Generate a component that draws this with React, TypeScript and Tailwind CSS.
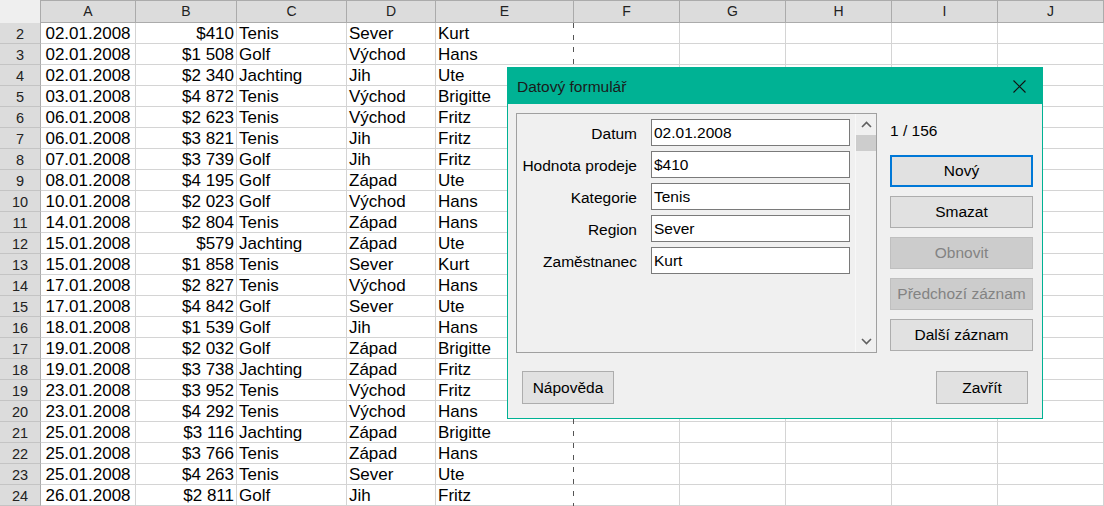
import React from "react";

type Row = [number, string, string, string, string, string];

const rows: Row[] = [
  [2, "02.01.2008", "$410", "Tenis", "Sever", "Kurt"],
  [3, "02.01.2008", "$1 508", "Golf", "Východ", "Hans"],
  [4, "02.01.2008", "$2 340", "Jachting", "Jih", "Ute"],
  [5, "03.01.2008", "$4 872", "Tenis", "Východ", "Brigitte"],
  [6, "06.01.2008", "$2 623", "Tenis", "Východ", "Fritz"],
  [7, "06.01.2008", "$3 821", "Tenis", "Jih", "Fritz"],
  [8, "07.01.2008", "$3 739", "Golf", "Jih", "Fritz"],
  [9, "08.01.2008", "$4 195", "Golf", "Západ", "Ute"],
  [10, "10.01.2008", "$2 023", "Golf", "Východ", "Hans"],
  [11, "14.01.2008", "$2 804", "Tenis", "Západ", "Hans"],
  [12, "15.01.2008", "$579", "Jachting", "Západ", "Ute"],
  [13, "15.01.2008", "$1 858", "Tenis", "Sever", "Kurt"],
  [14, "17.01.2008", "$2 827", "Tenis", "Východ", "Hans"],
  [15, "17.01.2008", "$4 842", "Golf", "Sever", "Ute"],
  [16, "18.01.2008", "$1 539", "Golf", "Jih", "Hans"],
  [17, "19.01.2008", "$2 032", "Golf", "Západ", "Brigitte"],
  [18, "19.01.2008", "$3 738", "Jachting", "Západ", "Fritz"],
  [19, "23.01.2008", "$3 952", "Tenis", "Východ", "Fritz"],
  [20, "23.01.2008", "$4 292", "Tenis", "Východ", "Hans"],
  [21, "25.01.2008", "$3 116", "Jachting", "Západ", "Brigitte"],
  [22, "25.01.2008", "$3 766", "Tenis", "Západ", "Hans"],
  [23, "25.01.2008", "$4 263", "Tenis", "Sever", "Ute"],
  [24, "26.01.2008", "$2 811", "Golf", "Jih", "Fritz"],
];

const cols = ["A", "B", "C", "D", "E", "F", "G", "H", "I", "J"];

const cell =
  "h-[21px] border-b border-r border-[#d4d4d4] text-[17px] leading-[20px] pt-[1px] overflow-hidden whitespace-nowrap text-black";

function Field({ label, value }: { label: string; value: string }) {
  return (
    <div className="flex items-center h-[27px]">
      <div className="w-[121px] text-right pr-[1px] pt-[2px] whitespace-nowrap">{label}</div>
      <div className="ml-[13px] w-[199px] h-[27px] bg-white border border-[#7a7a7a] flex items-center pl-[2px]">
        {value}
      </div>
    </div>
  );
}

function Btn({
  children,
  variant = "normal",
}: {
  children: React.ReactNode;
  variant?: "normal" | "default" | "disabled";
}) {
  const base = "w-[143px] h-[32px] flex items-center justify-center";
  if (variant === "default")
    return <div className={`${base} bg-[#e1e1e1] border-2 border-[#0078d7]`}>{children}</div>;
  if (variant === "disabled")
    return (
      <div className={`${base} bg-[#cccccc] border border-[#bfbfbf] text-[#838383]`}>{children}</div>
    );
  return <div className={`${base} bg-[#e1e1e1] border border-[#adadad]`}>{children}</div>;
}

function Chevron({ up }: { up: boolean }) {
  return (
    <svg width="11" height="7" viewBox="0 0 11 7">
      <path
        d={up ? "M1 6 L5.5 1.5 L10 6" : "M1 1 L5.5 5.5 L10 1"}
        fill="none"
        stroke="#606060"
        strokeWidth="1.6"
      />
    </svg>
  );
}

export default function App() {
  return (
    <div className="relative w-[1104px] h-[506px] overflow-hidden bg-white font-['Liberation_Sans',Arial,sans-serif]">
      <div className="grid grid-cols-[41px_95px_101px_110px_89px_138px_106px_106px_106px_106px_106px]">
        {/* header row */}
        <div className="h-[23px] bg-[#efefef] border-r border-[#ababab]" />
        {cols.map((c) => (
          <div
            key={c}
            className="h-[23px] bg-[#dcdcdc] border-t border-b border-r border-[#ababab] flex items-center justify-center text-[14px] text-[#222]"
          >
            {c}
          </div>
        ))}
        {rows.map((r) => (
          <React.Fragment key={r[0]}>
            <div className="h-[21px] bg-[#dcdcdc] border-r border-[#ababab] border-b border-b-[#c4c4c4] text-[14.5px] leading-[20px] pt-[1px] text-center text-[#222]">
              {r[0]}
            </div>
            <div className={`${cell} text-center`}>{r[1]}</div>
            <div className={`${cell} text-right pr-[2px]`}>{r[2]}</div>
            <div className={`${cell} pl-[2px]`}>{r[3]}</div>
            <div className={`${cell} pl-[2px]`}>{r[4]}</div>
            <div className={`${cell} pl-[2px] border-r-0`}>{r[5]}</div>
            <div className={cell} />
            <div className={cell} />
            <div className={cell} />
            <div className={cell} />
            <div className={cell} />
          </React.Fragment>
        ))}
      </div>

      {/* page break line */}
      <div className="absolute left-[573px] top-[23px] bottom-0 w-px bg-[repeating-linear-gradient(to_bottom,#555_0px,#555_5px,transparent_5px,transparent_12px)]" />

      {/* dialog */}
      <div className="absolute left-[507px] top-[67px] w-[536px] h-[352px] border border-[#00b294] bg-[#f0f0f0] flex flex-col text-[15.5px] text-black">
        <div className="h-[36px] bg-[#00b294] flex items-center justify-between shrink-0">
          <div className="pl-[9px] pt-[1px] text-[#1b1b1b]">Datový formulář</div>
          <div className="w-[46px] h-[36px] flex items-center justify-center">
            <svg width="13" height="13" viewBox="0 0 13 13">
              <path d="M0.5 0.5 L12.5 12.5 M12.5 0.5 L0.5 12.5" stroke="#111" strokeWidth="1.1" />
            </svg>
          </div>
        </div>
        <div className="flex-1 flex flex-col pl-[8px] pr-[9px] pt-[9px]">
          <div className="flex">
            <div className="w-[361px] h-[240px] shrink-0 border border-[#a0a0a0] flex">
              <div className="flex flex-col gap-[5px] pt-[5px]">
                <Field label="Datum" value="02.01.2008" />
                <Field label="Hodnota prodeje" value="$410" />
                <Field label="Kategorie" value="Tenis" />
                <Field label="Region" value="Sever" />
                <Field label="Zaměstnanec" value="Kurt" />
              </div>
              <div className="ml-auto w-[21px] h-full flex flex-col border-l border-[#f8f8f8]">
                <div className="h-[21px] flex items-center justify-center">
                  <Chevron up />
                </div>
                <div className="h-[16px] bg-[#cdcdcd]" />
                <div className="flex-1" />
                <div className="h-[22px] flex items-center justify-center">
                  <Chevron up={false} />
                </div>
              </div>
            </div>
            <div className="ml-[13px] shrink-0 flex flex-col pt-[8px]">
              <div className="h-[20px] leading-[20px]">1 / 156</div>
              <div className="mt-[14px] flex flex-col gap-[9px]">
                <Btn variant="default">Nový</Btn>
                <Btn>Smazat</Btn>
                <Btn variant="disabled">Obnovit</Btn>
                <Btn variant="disabled">Předchozí záznam</Btn>
                <Btn>Další záznam</Btn>
              </div>
            </div>
          </div>
          <div className="flex justify-between mt-[18px] pl-[6px] pr-[5px]">
            <div className="w-[92px] h-[33px] bg-[#e1e1e1] border border-[#adadad] flex items-center justify-center">
              Nápověda
            </div>
            <div className="w-[92px] h-[33px] bg-[#e1e1e1] border border-[#adadad] flex items-center justify-center">
              Zavřít
            </div>
          </div>
        </div>
      </div>
    </div>
  );
}
